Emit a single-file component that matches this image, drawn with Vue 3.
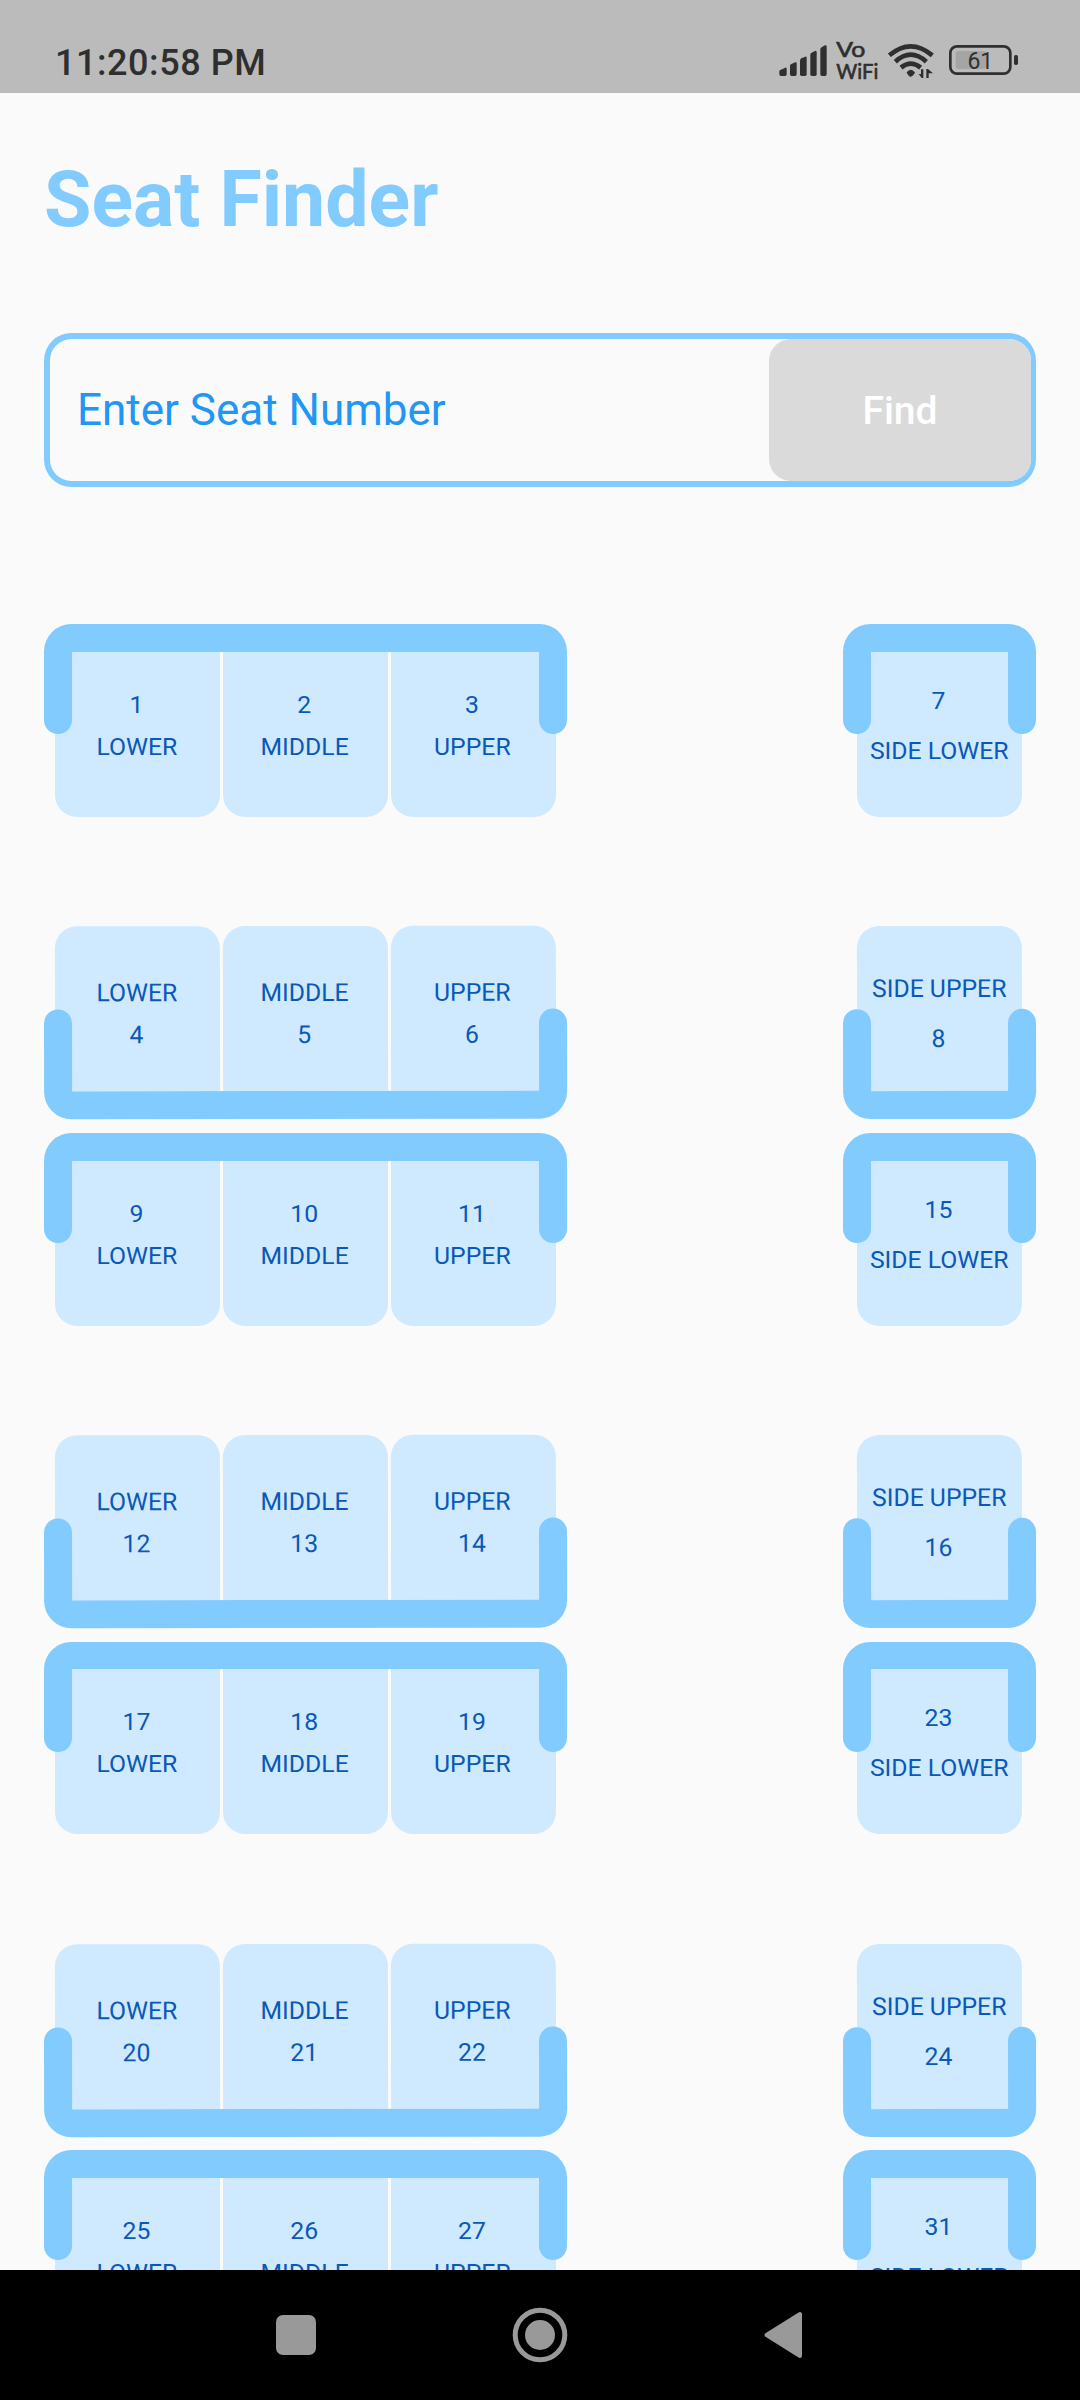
<script setup>
const bays = [0, 1, 2, 3].map((i) => {
  const n = i * 8
  return {
    id: i,
    lower: [
      { no: n + 1, berth: 'LOWER' },
      { no: n + 2, berth: 'MIDDLE' },
      { no: n + 3, berth: 'UPPER' },
    ],
    upper: [
      { no: n + 4, berth: 'LOWER' },
      { no: n + 5, berth: 'MIDDLE' },
      { no: n + 6, berth: 'UPPER' },
    ],
    sideLower: [{ no: n + 7, berth: 'SIDE LOWER' }],
    sideUpper: [{ no: n + 8, berth: 'SIDE UPPER' }],
  }
})

const rows = bays.flatMap((b) => [
  { id: `${b.id}-top`, up: false, benches: [{ seats: b.lower, side: false }, { seats: b.sideLower, side: true }] },
  { id: `${b.id}-bottom`, up: true, benches: [{ seats: b.upper, side: false }, { seats: b.sideUpper, side: true }] },
])
</script>

<template>
  <div class="screen">
    <header class="status">
      <span class="clock">11:20:58 PM</span>
      <svg class="indicators" viewBox="0 0 960 240" width="320" height="80">
        <g fill="#2f2f2f">
          <path d="M58 154Q58 151 61 150L76 143Q80 142 80 146V163Q80 168 75 168H63Q58 168 58 163Z" />
          <path d="M90 138Q90 134 94 132L106 127Q110 125 110 130V163Q110 168 105 168H95Q90 168 90 163Z" />
          <path d="M120 122Q120 117 124 115L136 110Q140 109 140 114V163Q140 168 135 168H125Q120 168 120 163Z" />
          <path d="M151 104Q151 100 155 98L165 93Q170 91 170 97V163Q170 168 165 168H156Q151 168 151 163Z" />
          <path d="M181 88Q181 84 185 82L195 76Q200 74 200 80V163Q200 168 195 168H186Q181 168 181 163Z" />
          <path d="M440 157Q452 142 465 157Q464 162 457 168Q452 172 447 168Q441 162 440 157Z" />
          <path d="M483 148H490V174H485L476 162H483Z" />
          <path d="M506 174H499V147H504L519 160H506Z" />
          <rect x="762" y="105" width="12" height="30" rx="5" />
        </g>
        <g class="net">
          <text x="229" y="112" textLength="87" lengthAdjust="spacingAndGlyphs">Vo</text>
          <text x="229" y="176" textLength="126" lengthAdjust="spacingAndGlyphs">WiFi</text>
        </g>
        <g fill="none" stroke="#2f2f2f" stroke-width="14">
          <path d="M388 106Q452 52 517 106" />
          <path d="M406 125Q452 83 499 125" />
          <path d="M423 143Q452 119 482 143" />
        </g>
        <rect x="587" y="93" width="91" height="54" rx="8" fill="#a5a5a5" />
        <rect x="571" y="79" width="180" height="82" rx="20" fill="none" stroke="#2f2f2f" stroke-width="8" />
        <text class="level" x="661" y="148" text-anchor="middle">61</text>
      </svg>
    </header>

    <main class="page">
      <h1 class="title">Seat Finder</h1>

      <div class="search">
        <span class="hint">Enter Seat Number</span>
        <button class="find" type="button">Find</button>
      </div>

      <section class="coach">
        <div v-for="row in rows" :key="row.id" class="row" :class="{ up: row.up }">
          <div v-for="(bench, i) in row.benches" :key="i" class="bench" :class="{ side: bench.side }">
            <div class="back"></div>
            <div class="seats">
              <div v-for="seat in bench.seats" :key="seat.no" class="seat">
                <span>{{ seat.no }}</span>
                <span class="berth">{{ seat.berth }}</span>
              </div>
            </div>
            <i class="arm left"></i>
            <i class="arm right"></i>
          </div>
        </div>
      </section>
    </main>

    <nav class="navbar">
      <svg viewBox="0 0 60 60" width="60" height="60">
        <rect x="10" y="10" width="40" height="40" rx="7" fill="#999" />
      </svg>
      <svg viewBox="0 0 60 60" width="60" height="60">
        <circle cx="30" cy="30" r="24.8" fill="none" stroke="#999" stroke-width="5" />
        <circle cx="30" cy="30" r="15" fill="#999" />
      </svg>
      <svg viewBox="0 0 60 60" width="60" height="60">
        <path d="M12.5 30L46 9V51Z" fill="#999" stroke="#999" stroke-width="4" stroke-linejoin="round" />
      </svg>
    </nav>
  </div>
</template>

<style>
body {
  margin: 0;
  background: #fafafa;
}
</style>

<style scoped>
.screen {
  width: 1080px;
  height: 2400px;
  display: flex;
  flex-direction: column;
  overflow: hidden;
  background: #fafafa;
  font-family: Roboto, "Liberation Sans", sans-serif;
}
.status {
  flex: none;
  height: 93px;
  box-sizing: border-box;
  padding: 20px 0 0 55px;
  display: flex;
  justify-content: space-between;
  background: #bbb;
  color: #2f2f2f;
}
.clock {
  font-size: 36px;
  font-weight: 500;
  line-height: 86px;
  letter-spacing: 0.55px;
  white-space: nowrap;
}
.indicators {
  display: block;
}
.net {
  font-family: Lato, sans-serif;
  font-size: 66px;
  font-weight: 400;
  fill: #2f2f2f;
  stroke: #2f2f2f;
  stroke-width: 2;
  stroke-linejoin: round;
}
.level {
  font-size: 69px;
  fill: #2f2f2f;
}
.page {
  flex: 1;
  min-height: 0;
  overflow: hidden;
  padding: 0 44px;
}
.title {
  margin: 62px 0 0;
  height: 90px;
  line-height: 90px;
  font-size: 77px;
  font-weight: 700;
  color: #81cbff;
  white-space: nowrap;
}
.search {
  margin-top: 87.5px;
  height: 154px;
  box-sizing: border-box;
  border: 6px solid #81cbff;
  border-right-width: 5px;
  border-radius: 27.5px;
  display: flex;
  justify-content: space-between;
}
.hint {
  padding-left: 27px;
  font-size: 44px;
  line-height: 142px;
  color: #2196f3;
}
.find {
  width: 262px;
  border: 0;
  padding: 2px 0 0;
  border-radius: 22px;
  background: #dadada;
  color: #fff;
  font: 500 39px/140px Roboto, sans-serif;
}
.coach {
  margin-top: 137.5px;
}
.row {
  display: flex;
  justify-content: space-between;
  margin-bottom: 110px;
}
.row.up {
  margin-bottom: 13.75px;
}
.row:nth-child(1),
.row:nth-child(3) {
  margin-bottom: 109.5px;
}
.row:nth-child(2) {
  margin-bottom: 14.5px;
}
.row:nth-child(4) {
  margin-bottom: 14px;
}
.bench {
  position: relative;
  width: 522.5px;
  height: 192.5px;
  display: flex;
  flex-direction: column;
}
.bench.side {
  width: 193px;
}
.up .bench {
  flex-direction: column-reverse;
  transform: rotate(-0.0016rad);
}
.back {
  height: 27.5px;
  border-radius: 27.5px 27.5px 0 0;
  background: #81cbff;
}
.up .back {
  border-radius: 0 0 27.5px 27.5px;
}
.seats {
  display: flex;
  gap: 2.75px;
  padding: 0 11px;
}
.side .seats {
  padding: 0 14px;
}
.seat {
  flex: 1;
  height: 165px;
  box-sizing: border-box;
  padding: 32px 2px 0 0;
  border-radius: 0 0 22px 22px;
  background: #cfe9ff;
  color: #0a58b8;
  display: flex;
  flex-direction: column;
  align-items: center;
  font-size: 24.75px;
  line-height: 42px;
  white-space: nowrap;
}
.berth {
  padding-left: 0.75px;
}
.side .berth {
  padding-left: 1.5px;
}
.side .seat {
  padding-top: 24px;
  line-height: 50px;
}
.up .seat {
  flex-direction: column-reverse;
  justify-content: flex-end;
  padding-top: 46px;
  border-radius: 22px 22px 0 0;
}
.up .side .seat {
  padding-top: 38px;
}
.arm {
  position: absolute;
  top: 27px;
  width: 28px;
  height: 83px;
  border-radius: 0 0 14px 14px;
  background: #81cbff;
}
.up .arm {
  top: auto;
  bottom: 27px;
  border-radius: 14px 14px 0 0;
}
.left {
  left: 0;
}
.right {
  right: 0;
}
.navbar {
  flex: none;
  height: 130px;
  box-sizing: border-box;
  padding: 0 266px;
  display: flex;
  align-items: center;
  justify-content: space-between;
  background: #000;
}
</style>
